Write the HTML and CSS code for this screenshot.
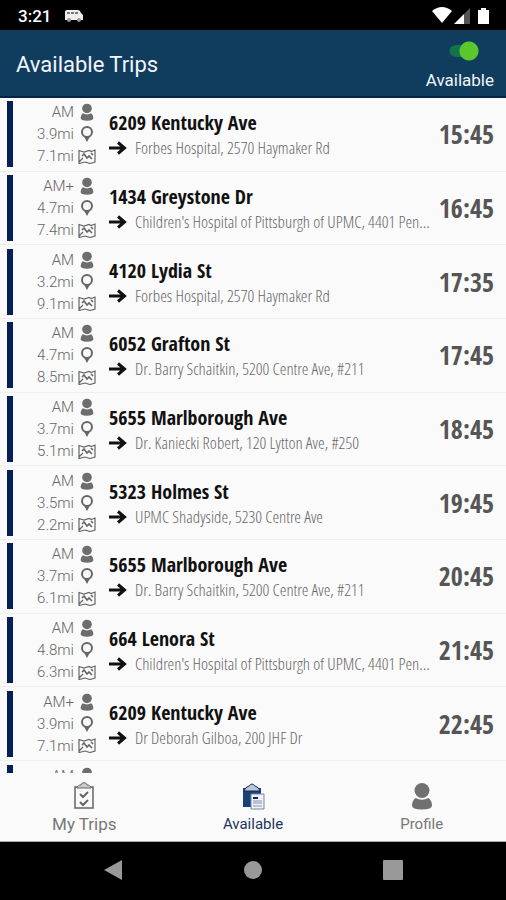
FILE: index.html
```html
<!DOCTYPE html>
<html lang="en">
<head>
    <meta charset="UTF-8">
    <meta name="viewport" content="width=device-width, initial-scale=1.0">
    <title>Available Trips</title>
    <link rel="stylesheet" href="styles.css">
</head>
<body>
    <svg class="sprite" aria-hidden="true">
        <symbol id="icon-person" viewBox="0 0 20 28">
            <circle cx="10" cy="8.500" r="7.500"/>
            <path d="M3.500 16q6.500 3.500 13 0 3.500 2.500 3.500 7.500 0 4-10 4t-10-4q0-5 3.500-7.500z"/>
        </symbol>
        <symbol id="icon-pin" viewBox="0 0 14 18">
            <circle cx="7" cy="7" r="5" fill="none" stroke="currentColor" stroke-width="2"/>
            <path d="M4 11.500h6L7 17z" fill="currentColor"/>
        </symbol>
        <symbol id="icon-map" viewBox="0 0 18 15">
            <path d="M1 1.500l5 1.500 5-1.500 2 1 4-1.500v12l-5 1.500-5-1.500-6 1.500zM1 13l4-4" fill="none" stroke="currentColor" stroke-width="1.200"/>
            <path d="M4 7l2-2 3 4 2-2 3 3M13 4l2 2" fill="none" stroke="currentColor" stroke-width="1.600"/>
        </symbol>
        <symbol id="icon-arrow" viewBox="0 0 18 14">
            <path d="M0 7h15M9 1.500l6.500 5.500L9 12.500" fill="none" stroke="currentColor" stroke-width="3"/>
        </symbol>
    </svg>

    <div class="status-bar">
        <span class="clock">3:21</span>
        <svg class="bus" viewBox="0 0 18 12" width="18" height="12">
            <path d="M2 0h11q2 0 3 3l2 2v5H0V2q0-2 2-2z" fill="#eee"/>
            <path d="M2 2h3v2H2zM6 2h3v2H6zM10 2h3v2h-3z" fill="#777"/>
            <circle cx="4" cy="10" r="2" fill="#999"/>
            <circle cx="14" cy="10" r="2" fill="#999"/>
        </svg>
        <svg class="signals" viewBox="0 0 58 18" width="58" height="18">
            <path d="M0 4q10-8 20 0L10 16z" fill="#fff"/>
            <path d="M22 17L32 7v10z" fill="#fff"/>
            <path d="M32 7l6-6v16h-6z" fill="#555"/>
            <path d="M46 3h3V1h5v2h3v14H46z" fill="#fff"/>
        </svg>
    </div>

    <header class="app-bar">
        <h1>Available Trips</h1>
        <label class="availability">
            <input type="checkbox" role="switch" checked>
            <span>Available</span>
        </label>
    </header>

    <main class="trips" id="trips"></main>

    <nav class="tabs">
        <a href="#my-trips" class="tab large">
            <svg viewBox="0 0 20 28" width="20" height="28" fill="none" stroke="#666">
                <path d="M1 5h18v21H1z" stroke-width="1.500"/>
                <path d="M3 6c0-2 2-3 4-3 0-3 6-3 6 0 2 0 4 1 4 3z" fill="#ccc"/>
                <path d="M6 12l3 3 5-5M6 20l3 3 5-5" stroke-width="2"/>
            </svg>
            <span>My Trips</span>
        </a>
        <a href="#available" class="tab active" aria-current="page">
            <svg viewBox="-2 0 26 28" width="26" height="28">
                <path d="M1 6h18v19H1z" fill="#164374"/>
                <path d="M2 9q1-4 5-5 3-4 6 0 4 1 5 5z" fill="#b9c6d8" stroke="#102a55"/>
                <path d="M9 12h13v15H9z" fill="#eef1f6" stroke="#7487a8"/>
                <path d="M11 19h9M11 21h9M11 24h9" stroke="#8494b0" fill="none"/>
                <path d="M11 16h5" stroke="#102a55" stroke-width="2"/>
            </svg>
            <span>Available</span>
        </a>
        <a href="#profile" class="tab">
            <svg width="20" height="28"><use href="#icon-person"/></svg>
            <span>Profile</span>
        </a>
    </nav>

    <div class="system-bar">
        <button aria-label="Back"><svg viewBox="0 0 20 20" width="20" height="20"><path d="M1 10L19 0v20z"/></svg></button>
        <button aria-label="Home"><svg viewBox="0 0 20 20" width="20" height="20"><circle cx="10" cy="10" r="9"/></svg></button>
        <button aria-label="Overview"><svg viewBox="0 0 20 20" width="20" height="20"><rect width="20" height="20" rx="1"/></svg></button>
    </div>

    <script>
        const trips = [
            ['AM', '3.9mi', '7.1mi', '6209 Kentucky Ave', 'Forbes Hospital, 2570 Haymaker Rd', '15:45'],
            ['AM+', '4.7mi', '7.4mi', '1434 Greystone Dr', "Children's Hospital of Pittsburgh of UPMC, 4401 Pen...", '16:45'],
            ['AM', '3.2mi', '9.1mi', '4120 Lydia St', 'Forbes Hospital, 2570 Haymaker Rd', '17:35'],
            ['AM', '4.7mi', '8.5mi', '6052 Grafton St', 'Dr. Barry Schaitkin, 5200 Centre Ave, #211', '17:45'],
            ['AM', '3.7mi', '5.1mi', '5655 Marlborough Ave', 'Dr. Kaniecki Robert, 120 Lytton Ave, #250', '18:45'],
            ['AM', '3.5mi', '2.2mi', '5323 Holmes St', 'UPMC Shadyside, 5230 Centre Ave', '19:45'],
            ['AM', '3.7mi', '6.1mi', '5655 Marlborough Ave', 'Dr. Barry Schaitkin, 5200 Centre Ave, #211', '20:45'],
            ['AM', '4.8mi', '6.3mi', '664 Lenora St', "Children's Hospital of Pittsburgh of UPMC, 4401 Pen...", '21:45'],
            ['AM+', '3.9mi', '7.1mi', '6209 Kentucky Ave', 'Dr Deborah Gilboa, 200 JHF Dr', '22:45']
        ];

        const stat = (text, icon) =>
            `<div class="stat"><span>${text}</span><svg class="${icon}"><use href="#icon-${icon}"/></svg></div>`;

        const rows = trips.map(([who, away, length, from, to, time]) => `
            <article class="trip">
                <div class="stats">${stat(who, 'person')}${stat(away, 'pin')}${stat(length, 'map')}</div>
                <div class="route">
                    <h2>${from}</h2>
                    <p><svg class="arrow"><use href="#icon-arrow"/></svg><span>${to}</span></p>
                </div>
                <time>${time}</time>
            </article>`);

        // next trip, only its top edge is in view
        rows.push(`<article class="trip partial"><div class="stats">${stat('AM', 'person')}</div></article>`);

        document.getElementById('trips').innerHTML = rows.join('');
    </script>
</body>
</html>
```

FILE: styles.css
```css
* {
    box-sizing: border-box;
}

body {
    margin: 0;
    height: 100vh;
    display: flex;
    flex-direction: column;
    background-color: #fafafa;
    color: #111;
    font-family: Roboto, sans-serif;
    overflow: hidden;
}

h1, h2, p {
    margin: 0;
}

.sprite {
    position: absolute;
    width: 0;
    height: 0;
}

.status-bar {
    display: flex;
    align-items: center;
    height: 30px;
    padding: 2px 16px 0 18px;
    background-color: #000;
    color: #fff;
}

.clock {
    font-size: 17px;
    font-weight: 500;
}

.bus {
    margin-left: 14px;
}

.signals {
    margin-left: auto;
}

.app-bar {
    display: flex;
    justify-content: space-between;
    align-items: center;
    height: 68px;
    padding: 2px 12px 0 16px;
    background-color: #103c5e;
    border-bottom: 2px solid #04234c;
    color: #f2f5fa;
}

.app-bar h1 {
    font-size: 22px;
    font-weight: 400;
}

.availability {
    display: flex;
    flex-direction: column;
    align-items: center;
    gap: 8px;
    padding-top: 4px;
    font-size: 17px;
    line-height: 22px;
}

.availability input {
    appearance: none;
    width: 30px;
    height: 20px;
    margin: 0 0 0 8px;
    background: radial-gradient(circle at 20px 10px, #5bc72b 9px, transparent 10px),
        linear-gradient(#15724f, #15724f) 6px 4px / 16px 12px no-repeat,
        radial-gradient(circle at 6px 10px, #15724f 5px, transparent 6px);
}

/* nine equal rows, then the start of the next one */
.trips {
    flex: 1;
    min-height: 0;
    display: grid;
    grid-template-rows: repeat(9, minmax(0, 1fr)) 12px;
}

.trip {
    display: flex;
    align-items: center;
    gap: 12px;
    padding: 4px 12px 4px 7px;
    border-bottom: 1px solid #efefef;
    overflow: hidden;
}

.stats {
    width: 90px;
    height: 66px;
    border-left: 6px solid #071f58;
    color: #666;
    font-size: 15px;
    font-weight: 300;
    line-height: 22px;
}

.stat {
    display: grid;
    grid-template-columns: 1fr 20px;
    align-items: center;
    justify-items: center;
    column-gap: 3px;
}

.stat span {
    justify-self: end;
}

.person {
    width: 14px;
    height: 18px;
    fill: #6d6d6d;
}

.pin {
    width: 14px;
    height: 18px;
}

.map {
    width: 18px;
    height: 15px;
}

.route {
    flex: 1;
    min-width: 0;
    padding-top: 2px;
    font-family: "Open Sans Condensed", "Liberation Sans Narrow", sans-serif;
    white-space: nowrap;
}

.route h2 {
    font-size: 20px;
    font-weight: 700;
    line-height: 26px;
}

.route p {
    display: flex;
    align-items: center;
    gap: 8px;
    color: #666;
    font-family: "Open Sans Condensed Light", "OpenSansCondensed-Light", "Open Sans Light Condensed", "OpenSans-CondensedLight", "Liberation Sans Narrow", sans-serif;
    font-size: 17px;
    font-weight: 300;
    line-height: 24px;
}

.arrow {
    width: 18px;
    height: 14px;
    color: #111;
    flex-shrink: 0;
}

.trip time {
    color: #555;
    font-family: "Open Sans Condensed", "Liberation Sans Narrow", sans-serif;
    font-size: 26px;
    font-weight: 700;
}

.partial {
    align-items: flex-start;
    padding-bottom: 0;
    border-bottom: 0;
}

.tabs {
    display: grid;
    grid-template-columns: repeat(3, 1fr);
    height: 69px;
    border-bottom: 1px solid #aaa;
}

.tab {
    display: flex;
    flex-direction: column;
    align-items: center;
    gap: 4px;
    padding-top: 9px;
    color: #777;
    fill: #707070;
    font-size: 15px;
    line-height: 20px;
    text-decoration: none;
}

.tab.large {
    font-size: 17px;
}

.tab.active {
    color: #173760;
}

.system-bar {
    display: flex;
    justify-content: center;
    gap: 120px;
    height: 58px;
    background-color: #000;
}

.system-bar button {
    padding: 0;
    border: 0;
    background: none;
    fill: #999;
}
```
